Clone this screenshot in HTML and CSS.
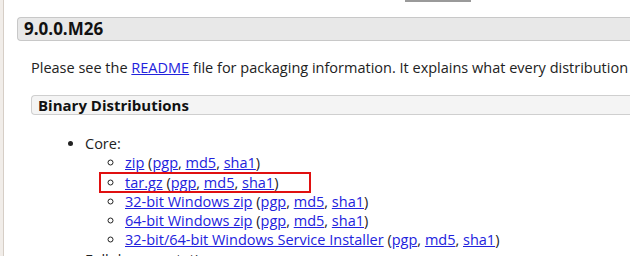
FILE: index.html
```html
<!DOCTYPE html>
<html lang="en">
<head>
    <meta charset="UTF-8">
    <title>Apache Tomcat 9 Downloads</title>
    <link rel="stylesheet" href="styles.css">
</head>
<body>
    <div class="page">
        <div class="top-strip"><span class="top-tab"></span></div>

        <div class="release">
            <h3 class="release-title">9.0.0.M26</h3>

            <div class="release-body">
                <p class="intro">Please see the <a href="#">README</a> file for packaging information. It explains what every distribution contains.</p>

                <h4 class="dist-title">Binary Distributions</h4>

                <ul class="dist-list">
                    <li>Core:
                        <ul class="sub-list">
                            <li><a href="#">zip</a> (<a href="#">pgp</a>, <a href="#">md5</a>, <a href="#">sha1</a>)</li>
                            <li><span class="marked"><a href="#">tar.gz</a> (<a href="#">pgp</a>, <a href="#">md5</a>, <a href="#">sha1</a>)</span></li>
                            <li><a href="#">32-bit Windows zip</a> (<a href="#">pgp</a>, <a href="#">md5</a>, <a href="#">sha1</a>)</li>
                            <li><a href="#">64-bit Windows zip</a> (<a href="#">pgp</a>, <a href="#">md5</a>, <a href="#">sha1</a>)</li>
                            <li><a href="#">32-bit/64-bit Windows Service Installer</a> (<a href="#">pgp</a>, <a href="#">md5</a>, <a href="#">sha1</a>)</li>
                        </ul>
                    </li>
                    <li>Full documentation:</li>
                </ul>
            </div>
        </div>
    </div>
</body>
</html>
```

FILE: styles.css
```css
html, body {
    margin: 0;
    height: 100%;
    overflow: hidden;
}
body {
    font-family: "Open Sans", "Liberation Sans", sans-serif;
    font-size: 14.5px;
    color: #222;
    background: #fff;
}
.page {
    min-height: 100%;
    border-left: 3px solid #f1ede9;
    box-shadow: inset 1px 0 0 #d6cec6;
}
.top-strip {
    height: 2px;
    padding-left: 402px;
}
.top-tab {
    display: block;
    width: 66px;
    height: 2px;
    background: #9a9a9a;
}
.release {
    padding: 15px 0 0 14px;
}
.release-title {
    margin: 0;
    height: 22px;
    padding: 0 6px;
    font-size: 17px;
    line-height: 22px;
    font-weight: bold;
    color: #111;
    background: #e8e8e8;
    border: 1px solid #c8c8c8;
    border-right: none;
    border-radius: 4px 0 0 4px;
    white-space: nowrap;
}
.release-body {
    padding-left: 14px;
}
.intro {
    margin: 17px 0 0 0;
    line-height: 20px;
    white-space: nowrap;
}
a {
    color: #2222dd;
    text-decoration: underline;
}
.dist-title {
    margin: 17px 0 0 0;
    height: 18px;
    padding: 0 6px;
    font-size: 15px;
    line-height: 18px;
    font-weight: bold;
    color: #111;
    background: #f4f4f4;
    border: 1px solid #cfcfcf;
    border-right: none;
    border-radius: 4px 0 0 4px;
}
.dist-list {
    margin: 19px 0 0 0;
    padding-left: 54px;
    line-height: 19.25px;
}
.sub-list {
    margin: 0;
    padding-left: 40px;
    list-style-type: circle;
}
.marked {
    position: relative;
}
.marked::after {
    content: "";
    position: absolute;
    left: -26px;
    right: -33px;
    top: -1px;
    bottom: -1px;
    border: 2px solid #e01010;
}
```
